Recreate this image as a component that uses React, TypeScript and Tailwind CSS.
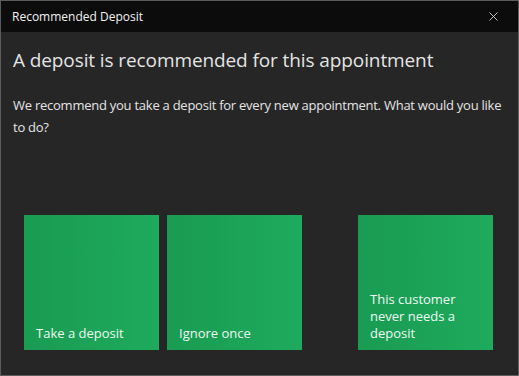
import { X } from 'lucide-react';

const tiles = [
    { label: 'Take a deposit' },
    { label: 'Ignore once' },
];

function Tile({ label, className = '' }: { label: string; className?: string }) {
    return (
        <button
            className={`w-[135px] h-[135px] flex items-end text-left px-3 pb-[8px] bg-gradient-to-r from-[#199b52] to-[#1eab5e] text-[#eef8f1] text-[13px] leading-[17px] ${className}`}
        >
            {label}
        </button>
    );
}

function App() {
    return (
        <div
            className="w-[519px] h-[376px] flex flex-col bg-[#262626] border border-[#5c5c5c] overflow-hidden"
            style={{ fontFamily: '"Open Sans", "Noto Sans", Arial, sans-serif' }}
        >
            {/* Title bar */}
            <div className="h-[31px] shrink-0 flex items-center justify-between bg-[#0c0c0c] pl-[11px] pr-[17px]">
                <span className="text-[12px] text-[#f2f2f2]">Recommended Deposit</span>
                <X className="h-[15px] w-[15px] text-[#d8d8d8]" strokeWidth={1.4} />
            </div>

            {/* Body */}
            <div className="flex flex-col px-3 text-[#e4e4e4]">
                <h1 className="mt-[14px] text-[19px] leading-[28px] tracking-[-0.1px]">
                    A deposit is recommended for this appointment
                </h1>
                <p className="mt-[20px] -mr-1 text-[13px] leading-[22px] tracking-[-0.25px]">
                    We recommend you take a deposit for every new appointment. What would you like to do?
                </p>

                <div className="mt-[77px] ml-[11px] flex">
                    {tiles.map((t) => (
                        <Tile key={t.label} label={t.label} className="mr-2" />
                    ))}
                    <Tile label="This customer never needs a deposit" className="ml-12" />
                </div>
            </div>
        </div>
    );
}

export default App;
